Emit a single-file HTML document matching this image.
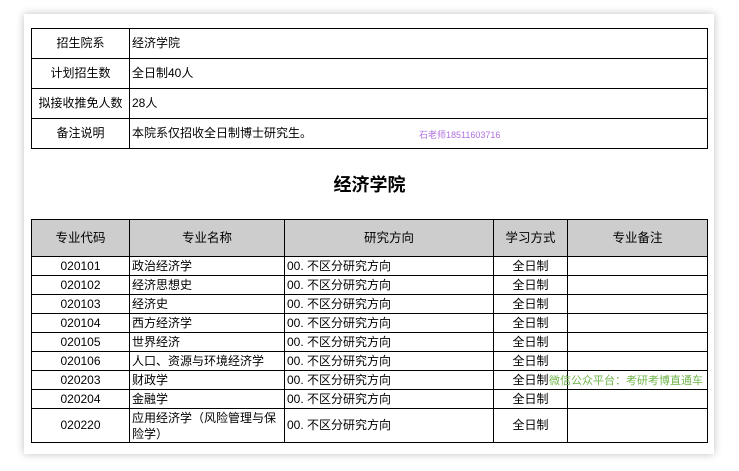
<!DOCTYPE html>
<html><head><meta charset="utf-8"><style>
body{margin:0;width:739px;height:471px;background:#fff;position:relative;overflow:hidden;font-family:"Liberation Sans","Noto Sans CJK SC",sans-serif;font-size:12px;color:#000}
.frame{position:absolute;left:24px;top:14px;width:690px;height:440px;box-shadow:0 0 8px rgba(0,0,0,.25);background:#fff}
table{position:absolute;border-collapse:collapse;table-layout:fixed}
td{border:1px solid #000;padding:0 2px;white-space:nowrap;overflow:hidden;line-height:17px}
.c{text-align:center}
#t1{left:31px;top:28px;width:676px}
#t1 td{height:29px}
#t2{left:31px;top:219px;width:676px}
#t2 td{height:18px}
#t2 tr.h td{height:36px;background:#cdcdcd;text-align:center;font-size:12.5px}
#t2 tr.tall td{height:33px}
.title{position:absolute;left:0;width:739px;top:171px;text-align:center;font-weight:bold;font-size:18px}
.wm{position:absolute;left:419px;top:128px;color:#b070e0;font-size:9px}
.wm2{position:absolute;left:549px;top:372px;color:#6fb54a;font-size:11px}
</style></head><body>
<div class="frame"></div>
<table id="t1">
<colgroup><col style="width:98px"><col style="width:578px"></colgroup>
<tr><td class="c">招生院系</td><td>经济学院</td></tr>
<tr><td class="c">计划招生数</td><td>全日制40人</td></tr>
<tr><td class="c">拟接收推免人数</td><td>28人</td></tr>
<tr><td class="c">备注说明</td><td>本院系仅招收全日制博士研究生。</td></tr>
</table>
<div class="wm">石老师18511603716</div>
<div class="title">经济学院</div>
<table id="t2">
<colgroup><col style="width:98px"><col style="width:155px"><col style="width:209px"><col style="width:74px"><col style="width:140px"></colgroup>
<tr class="h"><td>专业代码</td><td>专业名称</td><td>研究方向</td><td>学习方式</td><td>专业备注</td></tr>
<tr><td class="c">020101</td><td>政治经济学</td><td>00. 不区分研究方向</td><td class="c">全日制</td><td></td></tr>
<tr><td class="c">020102</td><td>经济思想史</td><td>00. 不区分研究方向</td><td class="c">全日制</td><td></td></tr>
<tr><td class="c">020103</td><td>经济史</td><td>00. 不区分研究方向</td><td class="c">全日制</td><td></td></tr>
<tr><td class="c">020104</td><td>西方经济学</td><td>00. 不区分研究方向</td><td class="c">全日制</td><td></td></tr>
<tr><td class="c">020105</td><td>世界经济</td><td>00. 不区分研究方向</td><td class="c">全日制</td><td></td></tr>
<tr><td class="c">020106</td><td>人口、资源与环境经济学</td><td>00. 不区分研究方向</td><td class="c">全日制</td><td></td></tr>
<tr><td class="c">020203</td><td>财政学</td><td>00. 不区分研究方向</td><td class="c">全日制</td><td></td></tr>
<tr><td class="c">020204</td><td>金融学</td><td>00. 不区分研究方向</td><td class="c">全日制</td><td></td></tr>
<tr class="tall"><td class="c">020220</td><td style="white-space:normal;line-height:16px">应用经济学（风险管理与保险学）</td><td>00. 不区分研究方向</td><td class="c">全日制</td><td></td></tr>
</table>
<div class="wm2">微信公众平台：考研考博直通车</div>
</body></html>
